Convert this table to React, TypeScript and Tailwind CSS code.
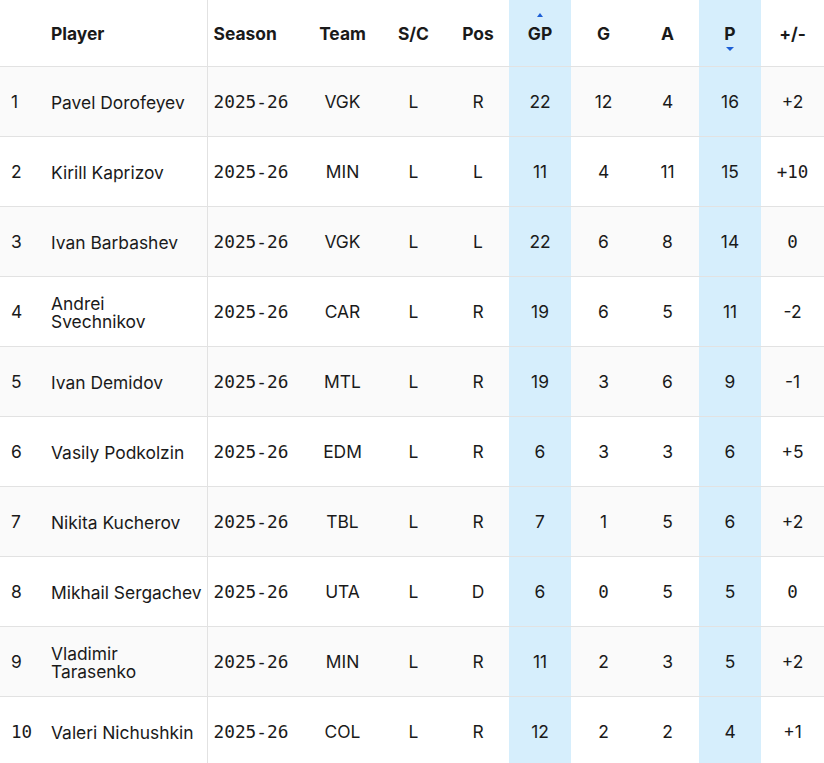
import type { ReactNode } from 'react'

type Row = {
  rank: number
  name: string
  season: string
  team: string
  sc: string
  pos: string
  gp: number
  g: number
  a: number
  p: number
  pm: string
}

const rows: Row[] = [
  { rank: 1, name: 'Pavel Dorofeyev', season: '2025-26', team: 'VGK', sc: 'L', pos: 'R', gp: 22, g: 12, a: 4, p: 16, pm: '+2' },
  { rank: 2, name: 'Kirill Kaprizov', season: '2025-26', team: 'MIN', sc: 'L', pos: 'L', gp: 11, g: 4, a: 11, p: 15, pm: '+10' },
  { rank: 3, name: 'Ivan Barbashev', season: '2025-26', team: 'VGK', sc: 'L', pos: 'L', gp: 22, g: 6, a: 8, p: 14, pm: '0' },
  { rank: 4, name: 'Andrei Svechnikov', season: '2025-26', team: 'CAR', sc: 'L', pos: 'R', gp: 19, g: 6, a: 5, p: 11, pm: '-2' },
  { rank: 5, name: 'Ivan Demidov', season: '2025-26', team: 'MTL', sc: 'L', pos: 'R', gp: 19, g: 3, a: 6, p: 9, pm: '-1' },
  { rank: 6, name: 'Vasily Podkolzin', season: '2025-26', team: 'EDM', sc: 'L', pos: 'R', gp: 6, g: 3, a: 3, p: 6, pm: '+5' },
  { rank: 7, name: 'Nikita Kucherov', season: '2025-26', team: 'TBL', sc: 'L', pos: 'R', gp: 7, g: 1, a: 5, p: 6, pm: '+2' },
  { rank: 8, name: 'Mikhail Sergachev', season: '2025-26', team: 'UTA', sc: 'L', pos: 'D', gp: 6, g: 0, a: 5, p: 5, pm: '0' },
  { rank: 9, name: 'Vladimir Tarasenko', season: '2025-26', team: 'MIN', sc: 'L', pos: 'R', gp: 11, g: 2, a: 3, p: 5, pm: '+2' },
  { rank: 10, name: 'Valeri Nichushkin', season: '2025-26', team: 'COL', sc: 'L', pos: 'R', gp: 12, g: 2, a: 2, p: 4, pm: '+1' },
]

// values with a zero show up in the mono face in the source page
function Val({ v }: { v: string | number }) {
  const s = String(v)
  return s.includes('0') ? <span className="font-['DejaVu_Sans_Mono',monospace] text-[17.5px]">{s}</span> : <>{s}</>
}

function Th({ children, hl, className = '' }: { children?: ReactNode; hl?: boolean; className?: string }) {
  return (
    <th className={`h-[66px] p-0 pt-[3px] font-bold ${hl ? 'bg-[#d6eefc]' : ''} ${className}`}>{children}</th>
  )
}

export default function App() {
  return (
    <div className="w-[824px] h-[763px] overflow-hidden bg-white font-['Inter',sans-serif] text-[17.4px] text-[#1a1a1a]">
      <table className="w-[824px] table-fixed border-collapse">
        <colgroup>
          <col className="w-[44px]" />
          <col className="w-[163px]" />
          <col className="w-[98px]" />
          <col className="w-[75px]" />
          <col className="w-[67px]" />
          <col className="w-[62px]" />
          <col className="w-[62px]" />
          <col className="w-[65px]" />
          <col className="w-[63px]" />
          <col className="w-[62px]" />
          <col className="w-[63px]" />
        </colgroup>
        <thead>
          <tr className="border-b border-[#e2e2e2]">
            <Th />
            <Th className="pl-[7px] text-left border-r border-[#e2e2e2]">Player</Th>
            <Th className="pl-[6px] text-left">Season</Th>
            <Th className="text-center">Team</Th>
            <Th className="text-center">S/C</Th>
            <Th className="text-center">Pos</Th>
            <Th hl className="text-center">
              <div className="relative">
                <span className="absolute left-1/2 -top-[8px] -translate-x-1/2 w-0 h-0 border-x-[3px] border-x-transparent border-b-[4px] border-b-[#1d5fd6]" />
                GP
              </div>
            </Th>
            <Th className="text-center">G</Th>
            <Th className="text-center">A</Th>
            <Th hl className="text-center">
              <div className="relative">
                P
                <span className="absolute left-1/2 top-[26px] -translate-x-1/2 w-0 h-0 border-x-[4px] border-x-transparent border-t-[4px] border-t-[#1d5fd6]" />
              </div>
            </Th>
            <Th className="text-center">+/-</Th>
          </tr>
        </thead>
        <tbody>
          {rows.map((r, i) => (
            <tr key={r.rank} className={`h-[70px] border-b border-[#e2e2e2] ${i % 2 === 0 ? 'bg-[#fafafa]' : 'bg-white'}`}>
              <td className="pl-[11px] pt-[3px]">
                <Val v={r.rank} />
              </td>
              <td className="pl-[7px] pr-1 pt-[3px] leading-[18px] border-r border-[#e2e2e2]">{r.name}</td>
              <td className="pl-[6px] pt-[3px] font-['DejaVu_Sans_Mono',monospace] text-[17.8px]">{r.season}</td>
              <td className="text-center pt-[3px]">{r.team}</td>
              <td className="text-center pt-[3px]">{r.sc}</td>
              <td className="text-center pt-[3px]">{r.pos}</td>
              <td className="text-center pt-[3px] bg-[#d6eefc]">
                <Val v={r.gp} />
              </td>
              <td className="text-center pt-[3px]">
                <Val v={r.g} />
              </td>
              <td className="text-center pt-[3px]">
                <Val v={r.a} />
              </td>
              <td className="text-center pt-[3px] bg-[#d6eefc]">
                <Val v={r.p} />
              </td>
              <td className="text-center pt-[3px]">
                <Val v={r.pm} />
              </td>
            </tr>
          ))}
        </tbody>
      </table>
    </div>
  )
}
